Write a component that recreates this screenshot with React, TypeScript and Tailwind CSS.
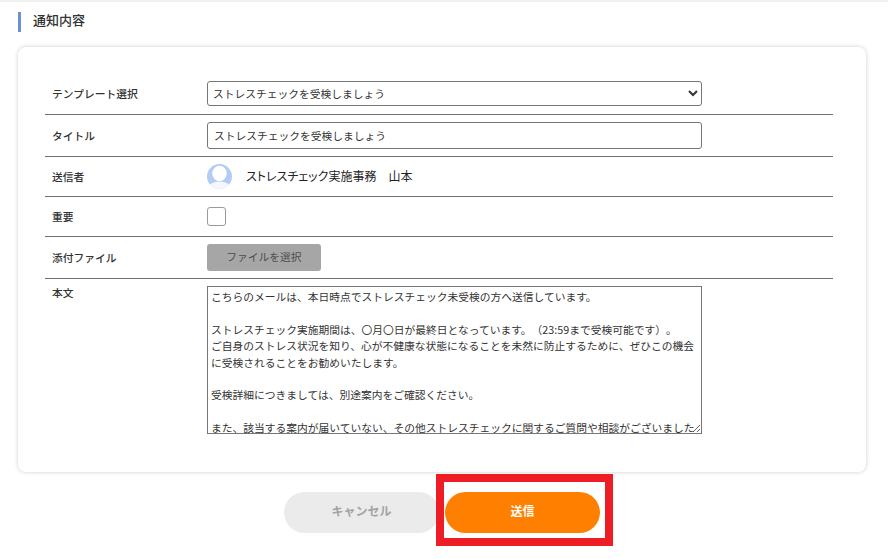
import React from 'react';

const FONT = "font-['Noto_Sans_CJK_JP','Noto_Sans',sans-serif] [text-spacing-trim:space-all]";

const body = `こちらのメールは、本日時点でストレスチェック未受検の方へ送信しています。

ストレスチェック実施期間は、〇月〇日が最終日となっています。（23:59まで受検可能です）。
ご自身のストレス状況を知り、心が不健康な状態になることを未然に防止するために、ぜひこの機会に受検されることをお勧めいたします。

受検詳細につきましては、別途案内をご確認ください。

また、該当する案内が届いていない、その他ストレスチェックに関するご質問や相談がございましたら、実施事務までご連絡ください。`;

const title = 'ストレスチェックを受検しましょう';

const Avatar = () => (
  <svg viewBox="0 0 25 25" className="w-[25px] h-[25px]" aria-hidden="true">
    <defs>
      <clipPath id="avatar-clip">
        <circle cx="12.5" cy="12.5" r="12.5" />
      </clipPath>
    </defs>
    <g clipPath="url(#avatar-clip)">
      <rect width="25" height="25" fill="#b3cbf5" />
      <ellipse cx="12.5" cy="9.5" rx="7.2" ry="7.8" fill="#ffffff" />
      <ellipse cx="12.5" cy="24" rx="11.5" ry="6.5" fill="#f4f7fe" />
    </g>
  </svg>
);

const Row: React.FC<{ label: string; className: string; children: React.ReactNode }> = ({ label, className, children }) => (
  <div className={`flex items-center border-b border-[#707070] ${className}`}>
    <div className="w-[162px] pl-[7px] pt-[1px] text-[10.75px] font-medium text-[#333333]">{label}</div>
    {children}
  </div>
);

export default function App() {
  return (
    <div className={`relative w-[888px] h-[559px] overflow-hidden bg-white border-t-2 border-[#f0f0f0] ${FONT}`}>
      <div className="ml-[18px] mt-[10px] h-5 border-l-[3px] border-[#6b8fdc] pl-3 text-[13px] font-medium leading-4 text-[#333333]">
        通知内容
      </div>

      <div className="ml-[18px] mr-[22px] mt-[15px] h-[425px] rounded-lg bg-white pl-[27px] pr-[33px] pt-[25px] shadow-[0_0_4px_rgba(0,0,0,0.2)]">
        <Row label="テンプレート選択" className="h-[43px] pt-[1px]">
          <select className="h-[25px] w-[495px] rounded-[3px] border border-[#767676] bg-white px-[1px] text-[10.75px] text-[#333333]">
            <option>{title}</option>
          </select>
        </Row>
        <Row label="タイトル" className="h-[42px]">
          <input
            readOnly
            value={title}
            className="h-[27px] w-[495px] rounded-[3px] border border-[#767676] px-[6px] pb-[1px] text-[10.75px] text-[#333333]"
          />
        </Row>
        <Row label="送信者" className="h-[40px]">
          <Avatar />
          <span className="ml-[14px] pb-[1px] text-[12px] text-[#222222] [font-feature-settings:'palt']">ストレスチェック実施事務　山本</span>
        </Row>
        <Row label="重要" className="h-[40px]">
          <div className="h-[19px] w-[19px] rounded-[3px] border border-[#9a9a9a] bg-white" />
        </Row>
        <Row label="添付ファイル" className="h-[42px]">
          <button className="h-[27px] w-[114px] rounded-[3px] bg-[#a6a6a6] text-[10.75px] text-[#4d4d4d]">
            ファイルを選択
          </button>
        </Row>
        <div className="flex pt-[7px]">
          <div className="w-[162px] pl-[7px] pt-[1px] text-[10.75px] font-medium leading-3 text-[#333333]">本文</div>
          <textarea
            readOnly
            defaultValue={body}
            className="h-[148px] w-[495px] overflow-hidden border border-[#767676] pl-[3px] pr-[4px] py-[2px] text-[10.75px] leading-[16.4px] text-[#333333]"
          />
        </div>
      </div>

      <div className="mt-5 flex justify-center gap-[6px] pr-[4px]">
        <button className="h-[41px] w-[155px] rounded-full bg-[#ebebeb] pb-[3px] text-[12px] font-bold text-[#a3a3a3]">
          キャンセル
        </button>
        <button className="h-[41px] w-[155px] rounded-full bg-[#ff8000] pb-[3px] text-[12px] font-bold text-white">
          送信
        </button>
      </div>

      <div className="absolute left-[436px] top-[472px] h-[72px] w-[177px] border-[8px] border-[#ee1c25]" />
    </div>
  );
}
